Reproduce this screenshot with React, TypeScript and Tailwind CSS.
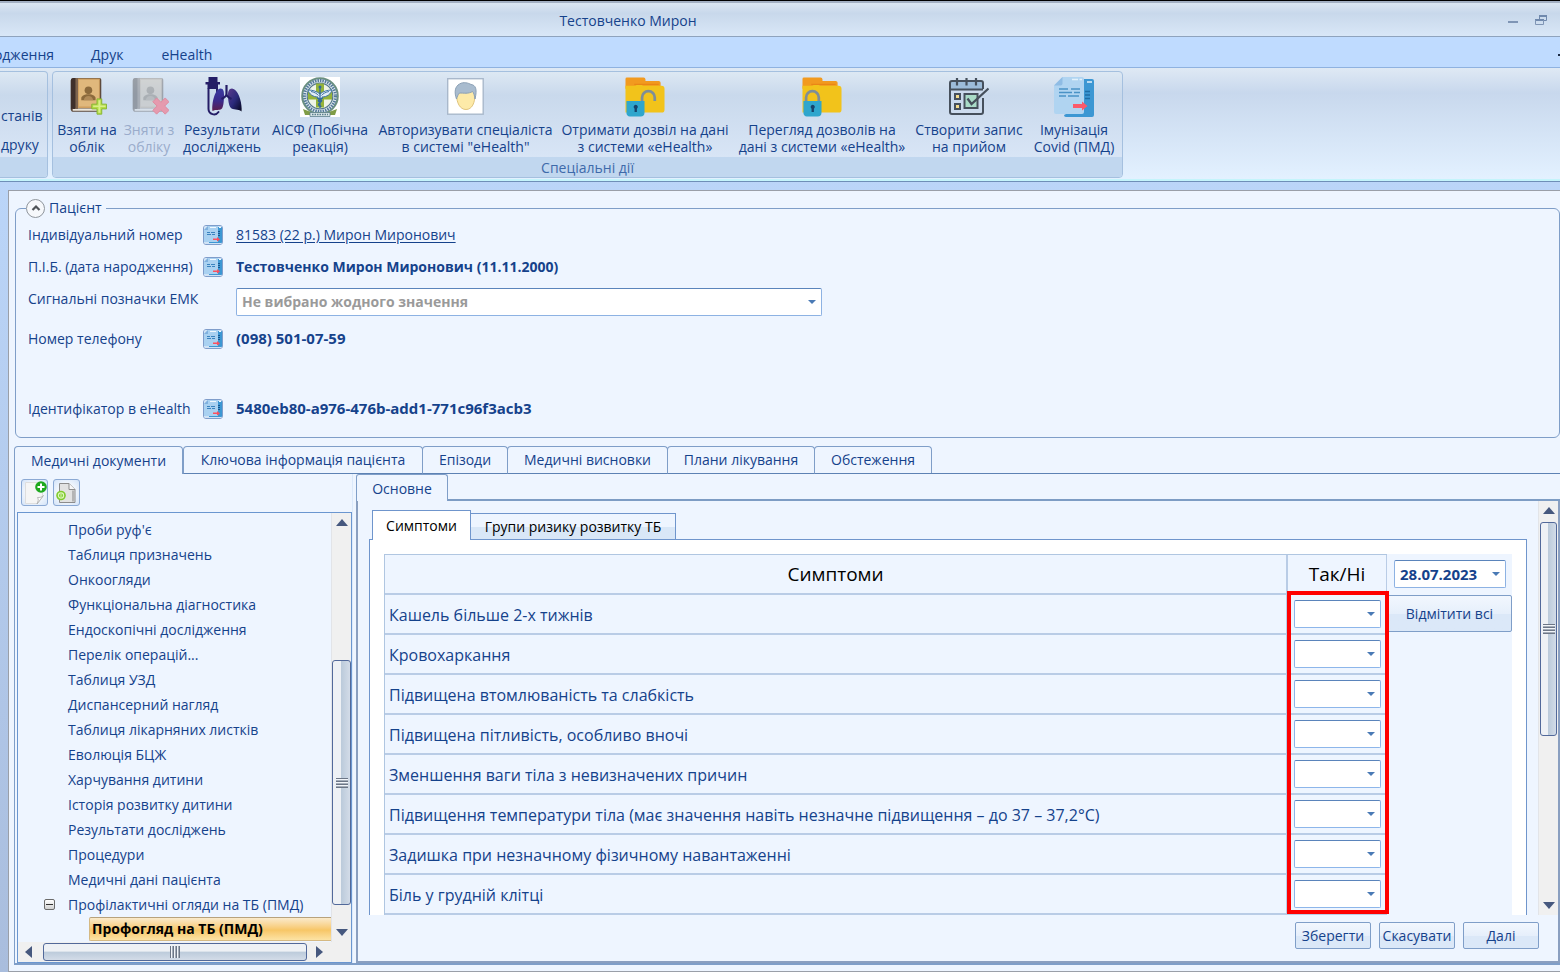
import React, { useState } from "react";

type IconProps = { className?: string };

function BookShape() {
  return (
    <g>
      <path d="M4 3.500a3 3 0 0 1 3-3h27a2 2 0 0 1 2 2V34a2 2 0 0 1-2 2H7a3 3 0 0 1-3-3z" fill="#5e4a3c" />
      <path d="M6 32.500H34.500V35H6z" fill="#ece7dc" />
      <path d="M11 1h23.500v31H11z" fill="#cf9f5f" />
      <path d="M12.500 2.500h21v28h-21z" fill="#e0b87c" />
      <path d="M4 3.500a3 3 0 0 1 3-3h2V33H6.500a2 2 0 0 0-2.500 1z" fill="#3f302b" />
      <path d="M9 .5h2.500V33H9z" fill="#7d644e" />
      <circle cx="22.500" cy="13.500" r="4" fill="#8c6a3c" />
      <path d="M15 24v-2.500c0-2 3-3.500 5.500-4h4c2.500.5 5.500 2 5.500 4V24z" fill="#8c6a3c" />
      <path d="M17.500 24c.5-3 2.500-4.500 5-4.500s4.500 1.500 5 4.500z" fill="#b08a58" />
    </g>
  );
}

function BookPlusIcon({ className }: IconProps) {
  return (
    <svg viewBox="0 0 42 41" className={className} aria-hidden="true">
      <BookShape />
      <path d="M31.500 22.500h5v5.500h5v5h-5v5.500h-5V33H26v-5h5.500z" fill="#b5dd45" stroke="#86b435" strokeWidth="1" />
      <path d="M33 24h2v13h-2zM27.500 29.500h13v1.500h-13z" fill="#d8f08a" />
    </svg>
  );
}

function BookRemoveIcon({ className }: IconProps) {
  return (
    <svg viewBox="0 0 42 41" className={className} aria-hidden="true">
      <g opacity=".38" style={{ filter: "saturate(.35)" }}>
        <BookShape />
      </g>
      <path
        d="M25 25.500l4-4 4.500 4.500 4.500-4.500 4 4-4.500 4.500 4.500 4.500-4 4-4.500-4.500-4.500 4.500-4-4 4.500-4.500z"
        fill="#e59aae"
        stroke="#dd8ba0"
      />
    </svg>
  );
}

function LungsIcon({ className }: IconProps) {
  return (
    <svg viewBox="0 0 40 40" className={className} aria-hidden="true">
      <defs>
        <linearGradient id="lungL" x1="0" y1="0" x2="0" y2="1">
          <stop offset="0" stopColor="#3a3aa0" />
          <stop offset=".55" stopColor="#3b2a8c" />
          <stop offset="1" stopColor="#5d1c4c" />
        </linearGradient>
        <linearGradient id="lungR" x1="0" y1="0" x2="1" y2="1">
          <stop offset="0" stopColor="#5a3a8c" />
          <stop offset=".5" stopColor="#2b2a7c" />
          <stop offset="1" stopColor="#06061c" />
        </linearGradient>
      </defs>
      <path d="M6.500 0h9v5h2.500v2.500h-2V12H5.500V7.500h-2V5h3z" fill="#241d66" />
      <path d="M6.500 12v20a5.500 5.500 0 0 0 10 3M15 12v4" fill="none" stroke="#241d66" strokeWidth="2" strokeLinecap="round" />
      <path d="M18.500 11.500c3 0 3.500 3 3.500 6 0 6-.5 12-2 14-2.500 2.500-6 .5-9.500 2.500-1-8 2.500-22 8-22.500z" fill="url(#lungL)" />
      <path d="M30 11.500c-3 0-4 3-4 6 0 6 1 11 2.500 13 2.500 3 7.500 1 11 4 1-8-3-22.500-9.500-23z" fill="url(#lungR)" />
      <path d="M24.500 8v9m0 0c0 2-2 3.500-5 5m5-5c0 2 2 3.500 5 5" fill="none" stroke="#241d66" strokeWidth="2.200" />
    </svg>
  );
}

function EmblemIcon({ className }: IconProps) {
  return (
    <svg viewBox="0 0 40 40" className={className} aria-hidden="true">
      <rect width="40" height="40" fill="#fff" />
      <circle cx="20" cy="19" r="17.800" fill="#dfe9ee" stroke="#6b9080" strokeWidth="2" />
      <circle cx="20" cy="19" r="15.500" fill="none" stroke="#54799a" strokeWidth="3" strokeDasharray="1.500 1" />
      <circle cx="20" cy="19" r="12.800" fill="#eef4e6" stroke="#55788c" strokeWidth="1.200" />
      <path d="M16 6.500h8v8h8v8h-8v8h-8v-8H8v-8h8z" fill="#94b33a" />
      <path d="M8 13c5 0 9 1.500 12 4 3-2.500 7-4 12-4-1 4-5 7-10 7v2h-4v-2C13 20 9 17 8 13z" fill="#e3eef7" stroke="#3f74a6" strokeWidth="1" />
      <path d="M11 14.500c3 .5 6 2 7.500 4M29 14.500c-3 .5-6 2-7.500 4" stroke="#3f74a6" fill="none" />
      <path d="M20 10v21M17 21c5 1.500 6 2.500 3 4.500s-1.500 3 1.500 4M23 21c-5 1.500-6 2.500-3 4.500" fill="none" stroke="#2f689f" strokeWidth="1.300" />
      <circle cx="20" cy="10" r="1.500" fill="#2f689f" />
      <path d="M3 32l8 3h18l8-3-2 6H5z" fill="#7f9c46" />
      <path d="M10 35.500h20v4H10z" fill="#d7e3e6" stroke="#5b7f8e" strokeWidth=".8" />
      <path d="M12 37.500h16" stroke="#5b7f8e" strokeWidth="1.500" strokeDasharray="1.500 1" />
    </svg>
  );
}

function FaceIcon({ className }: IconProps) {
  return (
    <svg viewBox="0 0 40 40" className={className} aria-hidden="true">
      <rect x="1.700" y="1.700" width="35.500" height="35.500" fill="#fff" stroke="#a9b8cb" strokeWidth="1.400" />
      <path d="M10.500 17c0 9 3.500 15.500 9.500 15.500s9-6.500 9-15.500l-2-5H13z" fill="#fdeaa8" stroke="#e0c47c" />
      <path
        d="M10.500 22C8 15 9 9.500 13.500 7c4-2.500 9-1 11.500.5 4.500.5 6.500 4.500 4 14.500-.5-3-1-6-2.500-7.500-4 2.500-9 1.500-13 1.500-1.500 1.500-2.500 4-3 6z"
        fill="#a9bccf"
        stroke="#8ba0b5"
      />
    </svg>
  );
}

function FolderShape() {
  return (
    <g>
      <path d="M0 2a1.500 1.500 0 0 1 1.500-1.500h17A2 2 0 0 1 20.500 2.500V4h13.500a2 2 0 0 1 2 2v6H0z" fill="#f29a1f" />
      <path d="M0 9h10l3-1.500H15L18 9h19a3 3 0 0 1 3 3v21.500a3 3 0 0 1-3 3H0z" fill="#f2c31b" />
      <path d="M9 7.600h25" stroke="#ea8616" strokeWidth="1.200" />
    </g>
  );
}

function LockBody() {
  return (
    <g>
      <path d="M1 24.500h18.500v12a4 4 0 0 1-4 4h-11a3.500 3.500 0 0 1-3.500-4z" fill="#2fa6cd" />
      <path d="M10.500 28.500a2.200 2.200 0 0 1 1.200 4v3.500H9.300v-3.500a2.200 2.200 0 0 1 1.200-4z" fill="#17446c" />
    </g>
  );
}

function FolderUnlockIcon({ className }: IconProps) {
  return (
    <svg viewBox="0 0 40 41" className={className} aria-hidden="true">
      <FolderShape />
      <path d="M17 24.500V21a6.500 6.500 0 0 1 13 0v3.500" fill="none" stroke="#7f8e97" strokeWidth="2.800" />
      <LockBody />
    </svg>
  );
}

function FolderLockIcon({ className }: IconProps) {
  return (
    <svg viewBox="0 0 40 41" className={className} aria-hidden="true">
      <FolderShape />
      <path d="M3.700 24.500V21a6.500 6.500 0 0 1 13 0v3.500" fill="none" stroke="#7f8e97" strokeWidth="2.800" />
      <LockBody />
    </svg>
  );
}

function CalendarIcon({ className }: IconProps) {
  return (
    <svg viewBox="0 0 40 40" className={className} aria-hidden="true">
      <path d="M1 12.500V6a2 2 0 0 1 2-2h28a2 2 0 0 1 2 2v6.500z" fill="#9dbcd9" />
      <path d="M1 12.500h33M34 12V6a2 2 0 0 0-2-2H3a2 2 0 0 0-2 2v29a2 2 0 0 0 2 2h29a2 2 0 0 0 2-2V21" fill="none" stroke="#46505c" strokeWidth="2" />
      <path d="M8 1v7.500M17.500 1v7.500M27 1v7.500" stroke="#46505c" strokeWidth="2.200" />
      <path d="M6 17h5v5H6zM6 27h5v5H6z" fill="#f4dc8c" stroke="#46505c" strokeWidth="2" />
      <path d="M15.500 17h13v14h-13z" fill="#a9dcc8" stroke="#46505c" strokeWidth="2" />
      <path d="M18.500 21.500l4 5.500L39.500 11.500" fill="none" stroke="#46505c" strokeWidth="2.200" />
    </svg>
  );
}

function DocsIcon({ className }: IconProps) {
  return (
    <svg viewBox="0 0 40 40" className={className} aria-hidden="true">
      <path d="M24 2h14a2 2 0 0 1 2 2V38a2 2 0 0 1-2 2H12a2 2 0 0 1-2-2l6-3z" fill="#3c97d3" />
      <path d="M8.500 0H28a2 2 0 0 1 2 2v33a2 2 0 0 1-2 2H2a2 2 0 0 1-2-2V8.500z" fill="#b0d4f1" />
      <path d="M8.500 0v6.500a2 2 0 0 1-2 2H0z" fill="#8fbce4" />
      <path d="M18 2.500h10M33 5h5" stroke="#e2f1fc" strokeWidth="1.600" strokeDasharray="6 1.500" />
      <path d="M5 12h9M17 12h9M5 15.500h13M20 15.500h6M5 19h7M14 19h11" stroke="#4a92c6" strokeWidth="1.400" />
      <path d="M31 14.500h5M31 18h5M31 21.500h5" stroke="#1f6da6" strokeWidth="1.400" />
      <path d="M19 27h9v-2.500l5.500 4.500-5.500 4.500V31h-9z" fill="#fb5a6b" />
    </svg>
  );
}

function SmallDocsIcon({ className }: IconProps) {
  return (
    <svg viewBox="0 0 18 18" className={className} aria-hidden="true">
      <path d="M0 0h18v18H0z" fill="#cfe2f5" />
      <path d="M13 1h5v16H5v-1h8z" fill="#3c97d3" />
      <path d="M0 4l4-4h10v16H0z" fill="#a9d1f1" />
      <path d="M4 0v4H0z" fill="#7fb0de" />
      <path d="M6 1.500h6M15 1.500h2" stroke="#f2f9ff" />
      <path d="M3 6.500h3M7 6.500h4M3 8.500h4M8 8.500h3" stroke="#3a83bf" />
      <path d="M14 5.500h2M14 7.500h2M14 9.500h2" stroke="#17568f" />
      <path d="M9 12.500h4V11l3 2.500-3 2V14H9z" fill="#fb5060" />
    </svg>
  );
}

function Triangle({ dir }: { dir: "up" | "down" | "left" | "right" }) {
  const d = {
    up: "M0 9L6 2l6 7z",
    down: "M0 3l6 7 6-7z",
    left: "M9 0L2 6l7 6z",
    right: "M3 0l7 6-7 6z",
  }[dir];
  return (
    <svg viewBox="0 0 12 12" className="size-3" aria-hidden="true">
      <path d={d} fill="#46587e" />
    </svg>
  );
}

function Caret({ className }: IconProps) {
  return (
    <svg viewBox="0 0 8 4" className={className} aria-hidden="true">
      <path d="M0 0h8L4 4z" fill="#4a7ab5" />
    </svg>
  );
}

const ribbonItems: { lines: [string, string]; icon: React.FC<IconProps>; width: string; disabled?: boolean }[] = [
  { lines: ["Взяти на", "облік"], icon: BookPlusIcon, width: "w-[58px]" },
  { lines: ["Зняти з", "обліку"], icon: BookRemoveIcon, width: "w-[50px]", disabled: true },
  { lines: ["Результати", "досліджень"], icon: LungsIcon, width: "w-[80px]" },
  { lines: ["АІСФ (Побічна", "реакція)"], icon: EmblemIcon, width: "w-[100px]" },
  { lines: ["Авторизувати спеціаліста", 'в системі "eHealth"'], icon: FaceIcon, width: "w-[175px]" },
  { lines: ["Отримати дозвіл на дані", "з системи «eHealth»"], icon: FolderUnlockIcon, width: "w-[168px]" },
  { lines: ["Перегляд дозволів на", "дані з системи «eHealth»"], icon: FolderLockIcon, width: "w-[170px]" },
  { lines: ["Створити запис", "на прийом"], icon: CalendarIcon, width: "w-[108px]" },
  { lines: ["Імунізація", "Covid (ПМД)"], icon: DocsIcon, width: "w-[86px]" },
];

const treeItems = [
  "Проби руф'є",
  "Таблиця призначень",
  "Онкоогляди",
  "Функціональна діагностика",
  "Ендоскопічні дослідження",
  "Перелік операцій...",
  "Таблиця УЗД",
  "Диспансерний нагляд",
  "Таблиця лікарняних листків",
  "Еволюція БЦЖ",
  "Харчування дитини",
  "Історія розвитку дитини",
  "Результати досліджень",
  "Процедури",
  "Медичні дані пацієнта",
];

const mainTabs = [
  { label: "Ключова інформація пацієнта", width: "w-[240px]" },
  { label: "Епізоди", width: "w-[86px]" },
  { label: "Медичні висновки", width: "w-[161px]" },
  { label: "Плани лікування", width: "w-[148px]" },
  { label: "Обстеження", width: "w-[118px]" },
];

const symptoms = [
  "Кашель більше 2-х тижнів",
  "Кровохаркання",
  "Підвищена втомлюваність та слабкість",
  "Підвищена пітливість, особливо вночі",
  "Зменшення ваги тіла з невизначених причин",
  "Підвищення температури тіла (має значення навіть незначне підвищення – до 37 – 37,2°C)",
  "Задишка при незначному фізичному навантаженні",
  "Біль у грудній клітці",
];

function TitleBar() {
  return (
    <header className="relative flex h-[37px] shrink-0 items-center justify-end border-t border-b border-t-black border-b-[#8fa3bd] bg-linear-to-b from-[#dfe9f4] from-0% via-[#c8d8eb] via-35% to-[#d9e7f7] to-100% pt-1 pr-[13px] shadow-[inset_0_2px_0_#a3b0c3]">
      <h1 className="absolute inset-x-0 top-[10px] mr-[304px] text-center text-sm/5">Тестовченко Мирон</h1>
      <div className="flex items-center gap-4">
        <button aria-label="Згорнути" className="grid size-3 place-items-center">
          <svg viewBox="0 0 12 12" className="size-3" aria-hidden="true">
            <path d="M1 7h10" stroke="#7f95b5" strokeWidth="2" />
          </svg>
        </button>
        <button aria-label="Відновити" className="grid size-3 place-items-center">
          <svg viewBox="0 0 12 12" className="size-3" aria-hidden="true">
            <path d="M4.500 4V.5h7v5H9" fill="none" stroke="#7089ad" strokeWidth="1" />
            <path d="M4 1h8M0 5h9" stroke="#7089ad" strokeWidth="2" />
            <path d="M.5 5v4.500h8V5" fill="none" stroke="#7f95b5" />
          </svg>
        </button>
      </div>
    </header>
  );
}

function Ribbon() {
  return (
    <>
      <nav className="flex h-[31px] shrink-0 items-center border-b border-[#8fb2e0] bg-[#bfdbff] pt-[6px]">
        <a href="#birth" className="flex w-[54px] justify-end whitespace-nowrap">одження</a>
        <a href="#print" className="ml-[37px]">Друк</a>
        <a href="#ehealth" className="ml-[38px]">eHealth</a>
        <span className="ml-auto size-[2px] bg-[#1a2a44]" />
      </nav>
      <div className="flex h-[114px] shrink-0 gap-1 border-b border-[#6f8fb8] bg-linear-to-b from-[#dfe9f4] from-0% via-[#c8d8ed] via-22% to-[#e3f1ff] to-98% pt-[3px] shadow-[inset_0_-2px_0_#c4f4fb]">
        <section className="flex h-[107px] w-12 flex-col overflow-hidden rounded-r border border-l-0 border-[#a5c0df] bg-linear-to-b from-[#dde8f3] via-[#c9d9ec] via-22% to-[#dde9f9]">
          <div className="flex flex-1 flex-col items-start gap-3 pt-[35px] pl-px">
            <button className="leading-[17px] whitespace-nowrap">станів</button>
            <button className="leading-[17px] whitespace-nowrap">друку</button>
          </div>
          <div className="h-5 shrink-0 bg-[#c1d7ef]" />
        </section>
        <section className="flex h-[107px] flex-col overflow-hidden rounded border border-[#a5c0df] bg-linear-to-b from-[#dde8f3] via-[#c9d9ec] via-22% to-[#dde9f9]">
          <div className="flex flex-1 gap-2 px-[5px] pt-[5px]">
            {ribbonItems.map(({ lines, icon: Icon, width, disabled }) => (
              <button
                key={lines[0]}
                disabled={disabled}
                className={`flex shrink-0 flex-col items-center gap-1 leading-[17px] whitespace-nowrap disabled:text-[#9aaccb] ${width}`}
              >
                <Icon className="size-10 shrink-0" />
                <span>
                  {lines[0]}
                  <br />
                  {lines[1]}
                </span>
              </button>
            ))}
          </div>
          <h2 className="h-5 shrink-0 bg-[#c1d7ef] text-center leading-[22px] text-[#3e6aaa]">Спеціальні дії</h2>
        </section>
      </div>
    </>
  );
}

function DocButton({ label }: { label: string }) {
  return (
    <button aria-label={label} className="grid size-5 place-items-center overflow-hidden rounded-[3px] border border-[#7f9dcb]">
      <SmallDocsIcon className="size-[18px]" />
    </button>
  );
}

function PatientPanel() {
  return (
    <fieldset className="ml-[6px] h-[240px] shrink-0 rounded-md border border-[#7f9ec8] pl-3">
      <legend className="-ml-[2px] flex h-5 items-center gap-1 pr-1">
        <button aria-label="Згорнути" className="grid size-[19px] place-items-center rounded-full border border-[#8f959c] bg-[#f6f8fb]">
          <svg viewBox="0 0 10 10" className="size-[10px]" aria-hidden="true">
            <path d="M1.500 7L5 3.500 8.500 7" fill="none" stroke="#4f5358" strokeWidth="2.200" />
          </svg>
        </button>
        Пацієнт
      </legend>
      <div className="grid grid-cols-[175px_33px_586px] items-center">
        <span className="h-[33px] leading-[33px]">Індивідуальний номер</span>
        <DocButton label="Картка" />
        <a href="#patient" className="justify-self-start underline underline-offset-2">81583 (22 р.) Мирон Миронович</a>
        <span className="h-8 leading-8">П.І.Б. (дата народження)</span>
        <DocButton label="Особові дані" />
        <strong>Тестовченко Мирон Миронович (11.11.2000)</strong>
        <label htmlFor="marks" className="col-span-2 h-[38px] leading-8">Сигнальні позначки ЕМК</label>
        <div className="relative">
          <select id="marks" className="h-7 w-full appearance-none rounded-[2px] border border-[#8db2e3] border-t-[#5a84bb] bg-white px-[5px] font-bold text-[#9a9a9a]">
            <option>Не вибрано жодного значення</option>
          </select>
          <Caret className="pointer-events-none absolute top-3 right-[6px] h-1 w-2" />
        </div>
        <span className="h-9 leading-9">Номер телефону</span>
        <DocButton label="Телефони" />
        <strong className="text-[15px]">(098) 501-07-59</strong>
        <span className="mt-9 h-8 leading-8">Ідентифікатор в eHealth</span>
        <div className="mt-9"><DocButton label="Ідентифікатор" /></div>
        <strong className="mt-9 text-[15px]">5480eb80-a976-476b-add1-771c96f3acb3</strong>
      </div>
    </fieldset>
  );
}

function Grip({ vertical }: { vertical?: boolean }) {
  return (
    <span
      className={
        vertical
          ? "h-[10px] w-3 bg-[repeating-linear-gradient(to_bottom,#6c7686_0_1px,#f2f5f9_1px_2px,#a4adb9_2px_3px)]"
          : "h-3 w-[10px] bg-[repeating-linear-gradient(to_right,#6c7686_0_1px,#f2f5f9_1px_2px,#a4adb9_2px_3px)]"
      }
    />
  );
}

function VerticalScrollbar({ before, thumb }: { before: string; thumb: string }) {
  return (
    <div className="flex w-5 shrink-0 flex-col items-center border-l border-[#e2e4e8] bg-[#f0f0f0]">
      <button aria-label="Вгору" className="grid h-5 place-items-center"><Triangle dir="up" /></button>
      <div className={before} />
      <div className={`grid place-items-center rounded-[3px] border border-[#52699a] bg-linear-to-r from-[#eef1f5] from-45% via-[#bccbdb] via-50% to-[#d3dce8] ${thumb}`}>
        <Grip vertical />
      </div>
      <div className="flex-1" />
      <button aria-label="Вниз" className="grid h-5 place-items-center"><Triangle dir="down" /></button>
    </div>
  );
}

const toolButton =
  "grid size-[27px] place-items-center rounded-[3px] border border-[#8ba9d4] bg-radial from-white from-30% to-[#d3e3f8]";

function DocumentTree() {
  return (
    <aside className="flex w-[338px] shrink-0 flex-col border-r border-r-[#dbe9fb] pt-[5px]">
      <div className="mb-[6px] flex gap-[5px] pl-[6px]">
        <button aria-label="Створити" className={toolButton}>
          <svg viewBox="0 0 24 24" className="size-6" aria-hidden="true">
            <path d="M2.500 1.500h17V16l-5 6.500h-12z" fill="#f5f5f5" stroke="#dedede" />
            <path d="M20.500 14.500c-1.500 2-4 2-6 2 1.500 2 .5 4-.5 6.500z" fill="#fff" stroke="#a9a9a9" strokeWidth=".8" />
            <circle cx="18" cy="6" r="5.800" fill="#1da81d" />
            <path d="M18 2.500v7M14.500 6h7" stroke="#fff" strokeWidth="2" />
          </svg>
        </button>
        <button aria-label="Перенести" className={toolButton}>
          <svg viewBox="0 0 24 24" className="size-6" aria-hidden="true">
            <path d="M4.500 2.500H14l6 6v13H4.500z" fill="#e2e2e2" stroke="#8c8c8c" />
            <path d="M14 2.500V8.500h6" fill="#f8f8f8" stroke="#8c8c8c" />
            <path d="M17 9.500v11h2.500v-11z" fill="#b4b4b4" />
            <circle cx="6" cy="14.500" r="4.800" fill="#7fcb2d" />
            <circle cx="6" cy="14.500" r="2.600" fill="none" stroke="#dff7bf" strokeWidth="1.200" />
            <path d="M6 13v3" stroke="#dff7bf" />
          </svg>
        </button>
      </div>
      <div className="ml-[2px] flex min-h-0 flex-1 flex-col border border-[#6a96d0]">
        <div className="flex min-h-0 flex-1">
          <ul className="min-w-0 flex-1 overflow-hidden pt-1 leading-[25px] whitespace-nowrap">
            {treeItems.map((item) => (
              <li key={item} className="h-[25px] pl-[50px]">{item}</li>
            ))}
            <li>
              <div className="flex h-[25px] items-center pl-[26px]">
                <button aria-label="Згорнути гілку" className="mr-[13px] grid size-[11px] place-items-center rounded-[2px] border border-[#6b6b6b] bg-linear-to-b from-white to-[#d2d2d2]">
                  <span className="h-px w-[7px] bg-[#333]" />
                </button>
                Профілактичні огляди на ТБ (ПМД)
              </div>
              <ul className="pl-[71px]">
                <li className="h-6 rounded-l-[2px] border border-r-0 border-[#d5b983] border-t-[#b8a27c] bg-linear-to-b from-[#faeacb] from-0% via-[#f7c666] via-55% to-[#fce3a4] pl-[2px] leading-[22px] font-bold text-black">
                  Профогляд на ТБ (ПМД)
                </li>
              </ul>
            </li>
          </ul>
          <VerticalScrollbar before="h-[127px]" thumb="h-[245px] w-[19px]" />
        </div>
        <div className="flex h-5 shrink-0 items-center bg-[#f0f0f0]">
          <button aria-label="Ліворуч" className="mr-2 ml-[5px]"><Triangle dir="left" /></button>
          <div className="grid h-[18px] w-[264px] place-items-center rounded-[3px] border border-[#52699a] bg-linear-to-b from-[#eef1f5] from-45% via-[#bccbdb] via-50% to-[#d3dce8]">
            <Grip />
          </div>
          <button aria-label="Праворуч" className="ml-[6px]"><Triangle dir="right" /></button>
        </div>
      </div>
    </aside>
  );
}

function SymptomsTable() {
  return (
    <div className="relative flex-1">
      <table className="w-full table-fixed border-separate border-spacing-0 border-t border-l border-[#b0c6e1]">
        <thead>
          <tr className="h-10 text-[19px] text-black">
            <th className="border-r-2 border-b-2 border-[#b9cce6] p-0 pt-[2px] font-normal">Симптоми</th>
            <th className="w-[99px] border-r border-b-2 border-[#b9cce6] p-0 pt-[2px] font-normal">Так/Ні</th>
          </tr>
        </thead>
        <tbody>
          {[...symptoms, ""].map((symptom, i) => (
            <tr key={i} className="h-10">
              <td className="border-r-2 border-b-2 border-[#b9cce6] p-0 pt-[2px] pl-1 text-base">
                <label htmlFor={`symptom-${i}`}>{symptom}</label>
              </td>
              <td className="border-r border-b-2 border-[#b9cce6] p-0 pl-[6px]">
                <div className="relative h-7 w-[87px]">
                  <select id={`symptom-${i}`} className="h-7 w-full appearance-none rounded-[2px] border border-[#8db6ea] border-t-[#5a84bb] bg-white">
                    <option />
                    <option>Так</option>
                    <option>Ні</option>
                  </select>
                  <Caret className="pointer-events-none absolute top-3 right-[6px] h-1 w-2" />
                </div>
              </td>
            </tr>
          ))}
        </tbody>
      </table>
      <div className="pointer-events-none absolute top-[37px] -right-[2px] h-[323px] w-[102px] border-4 border-[#ff0000]" />
    </div>
  );
}

const actionButton =
  "rounded-[2px] border border-[#7f9ec8] bg-linear-to-b from-[#f2f7fe] from-0% via-[#e6effb] via-50% to-[#dbe8f8] to-51%";

function ExamPanel() {
  const [date, setDate] = useState("28.07.2023");
  return (
    <section className="ml-[3px] flex min-w-0 flex-1 flex-col">
      <div className="flex h-[27px] shrink-0 items-end">
        <button className="h-[27px] w-[92px] rounded-t-[3px] border border-b-0 border-[#7f9ec8] pt-px">Основне</button>
        <div className="h-full flex-1 border-b-2 border-[#7d9cc4]" />
      </div>
      <div className="flex min-h-0 flex-1 flex-col border-r-2 border-b-2 border-l-2 border-[#8a9fc0]">
        <div className="flex min-h-0 flex-1">
          <div className="min-w-0 flex-1 overflow-hidden pt-[9px] pr-[11px] pl-[11px]">
            <div role="tablist" className="relative z-10 -mb-px flex items-end pl-[3px] text-black">
              <button role="tab" aria-selected="true" className="h-[30px] w-[99px] border border-b-0 border-[#6f95cc] bg-white">Симптоми</button>
              <button role="tab" aria-selected="false" className="h-[27px] w-[205px] border border-l-0 border-[#6f95cc] bg-linear-to-b from-[#eef5ff] from-50% to-[#d9e7f7] to-52%">
                Групи ризику розвитку ТБ
              </button>
            </div>
            <div className="flex border border-[#6f95cc] bg-white p-[14px]">
              <div className="flex flex-1 bg-[#eef5ff]">
                <SymptomsTable />
                <div className="flex w-[125px] flex-col gap-[7px] pt-[6px]">
                  <div className="relative ml-[7px] w-28">
                    <input
                      aria-label="Дата"
                      value={date}
                      onChange={(e) => setDate(e.target.value)}
                      className="h-7 w-full rounded-[2px] border border-[#8db2e3] border-t-[#5a84bb] bg-white px-[5px] text-[15px] font-bold"
                    />
                    <button aria-label="Відкрити календар" className="absolute top-3 right-[6px]">
                      <Caret className="block h-1 w-2" />
                    </button>
                  </div>
                  <button className={`h-[37px] w-full pt-px ${actionButton}`}>Відмітити всі</button>
                </div>
              </div>
            </div>
          </div>
          <VerticalScrollbar before="h-px" thumb="h-[214px] w-[17px]" />
        </div>
        <div className="flex h-[46px] shrink-0 items-start justify-end gap-2 pt-[7px] pr-[19px]">
          <button className={`h-[27px] w-[76px] ${actionButton}`}>Зберегти</button>
          <button className={`h-[27px] w-[76px] ${actionButton}`}>Скасувати</button>
          <button className={`h-[27px] w-[76px] ${actionButton}`}>Далі</button>
        </div>
      </div>
    </section>
  );
}

export default function App() {
  return (
    <div className="flex h-screen flex-col overflow-hidden bg-linear-to-b from-[#bfdbff] to-[#a9bddd] font-['Open_Sans','Noto_Sans',sans-serif] text-sm text-[#15428b]">
      <TitleBar />
      <Ribbon />
      <main className="mt-2 ml-2 flex min-h-0 flex-1 flex-col border border-r-0 border-[#9a9fa8] bg-[#eef5ff] pt-[7px]">
        <PatientPanel />
        <div role="tablist" className="mt-2 flex h-7 shrink-0 items-end pl-[5px]">
          <button role="tab" aria-selected="true" className="h-7 w-[169px] rounded-t border border-b-0 border-[#7f9ec8] pt-px">
            Медичні документи
          </button>
          {mainTabs.map((tab) => (
            <button key={tab.label} role="tab" aria-selected="false" className={`-mr-px h-7 rounded-t border border-[#7f9ec8] border-b-[#5d82b4] whitespace-nowrap ${tab.width}`}>
              {tab.label}
            </button>
          ))}
          <div className="h-px flex-1 bg-[#5d82b4]" />
        </div>
        <div className="mb-[6px] ml-[5px] flex min-h-0 flex-1 border-b-2 border-l border-[#7f9ec8]">
          <DocumentTree />
          <ExamPanel />
        </div>
      </main>
    </div>
  );
}
